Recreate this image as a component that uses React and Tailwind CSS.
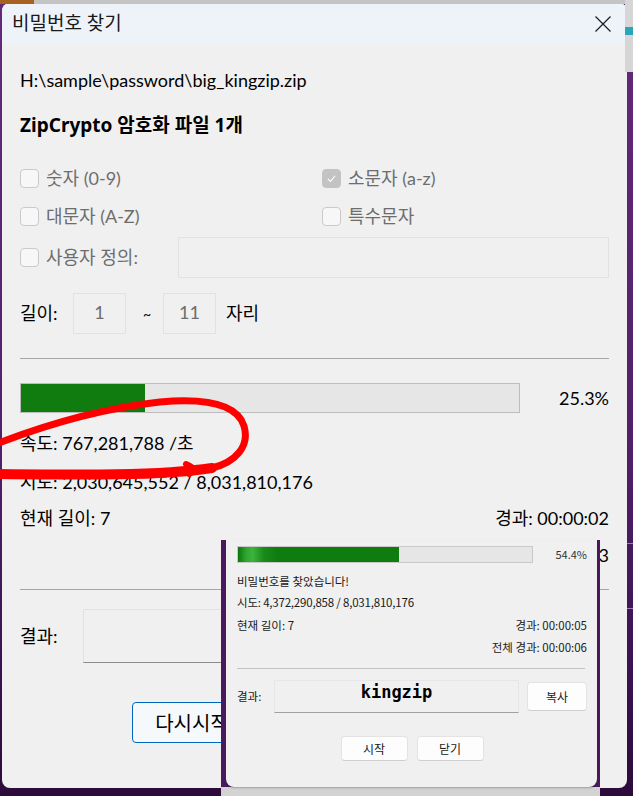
import React from 'react';

const sans = "font-['Lato','Noto_Sans_CJK_KR',sans-serif]";

function CheckBox({ checked, label }) {
  return (
    <div className="flex h-[24px] items-center">
      <span
        className={`flex h-[19px] w-[19px] items-center justify-center rounded-[4px] border ${
          checked ? 'border-[#c3c3c3] bg-[#c3c3c3]' : 'border-[#cacaca] bg-[#f7f7f7]'
        }`}
      >
        {checked && (
          <svg width="11" height="11" viewBox="0 0 12 12" fill="none">
            <path d="M2 6.5 L4.8 9.2 L10 3" stroke="#ffffff" strokeWidth="1.2" />
          </svg>
        )}
      </span>
      <span className="ml-[7px] text-[#6d6d6d]">{label}</span>
    </div>
  );
}

function MiniButton({ children, className = '' }) {
  return (
    <div
      className={`flex items-center justify-center rounded-[4px] border border-[#e3e3e3] border-b-[#cfcfcf] bg-[#fdfdfd] text-[12px] text-[#1a1a1a] ${className}`}
    >
      {children}
    </div>
  );
}

// Found-password window pasted on top of the main dialog
function FoundPanel() {
  return (
    <div className="absolute left-[221px] top-[540px] flex h-[256px] w-[379px] flex-col bg-[#d3d3d3]">
      <div className="flex h-[247px] bg-[#4a1a5e]">
        <div className="w-[5px]" />
        <div className="flex w-[371px] flex-col rounded-b-[8px] bg-[#f0f0f0] pl-[11px] pr-[10px] font-['Noto_Sans_CJK_KR',sans-serif] text-[11.5px] text-[#1a1a1a] shadow-[0_1px_2px_rgba(0,0,0,0.25)]">
          <div className="mt-[6px] flex h-[17px] items-center justify-between">
            <div className="h-[17px] w-[296px] border border-[#c9c9c9] bg-[#e6e6e6]">
              <div className="h-full w-[161px] bg-[linear-gradient(90deg,#0b760b_0%,#2fa52f_5%,#3cb33c_9%,#1a8a1a_16%,#0f7c0f_24%,#107c10_100%)]" />
            </div>
            <span className="text-[11px] text-[#333]">54.4%</span>
          </div>
          <div className="mt-[10px] flex h-[18px] items-center">비밀번호를 찾았습니다!</div>
          <div className="mt-[3px] flex h-[18px] items-center tracking-[-0.2px]">시도: 4,372,290,858 / 8,031,810,176</div>
          <div className="mt-[5px] flex h-[18px] items-center justify-between">
            <span>현재 길이: 7</span>
            <span>경과: 00:00:05</span>
          </div>
          <div className="mt-[4px] flex h-[18px] items-center justify-end">전체 경과: 00:00:06</div>
          <div className="mr-[2px] mt-[11px] h-px bg-[#c2c2c2]" />
          <div className="mt-[11px] flex h-[33px] items-center">
            <span className="w-[37px]">결과:</span>
            <div className="flex h-[33px] w-[245px] justify-center border border-[#e6e6e6] border-b-[#a0a0a0] bg-[#f0f0f0] font-['DejaVu_Sans_Mono',monospace] text-[17px] font-bold leading-[22px] text-black">
              kingzip
            </div>
            <MiniButton className="ml-[8px] h-[29px] w-[60px]">복사</MiniButton>
          </div>
          <div className="mt-[23px] flex justify-center gap-[9px]">
            <MiniButton className="h-[25px] w-[67px]">시작</MiniButton>
            <MiniButton className="h-[25px] w-[67px]">닫기</MiniButton>
          </div>
        </div>
        <div className="w-[3px]" />
      </div>
    </div>
  );
}

// Red marker loop drawn around the speed line
function MarkerLoop() {
  return (
    <svg className="pointer-events-none absolute left-0 top-0 blur-[0.6px]" width="633" height="796" viewBox="0 0 633 796" fill="none">
      <path
        d="M -4 444 C 40 427, 95 409, 160 402 C 205 398, 237 404, 244 426 C 250 446, 236 462, 212 468"
        stroke="#ff0000"
        strokeWidth="7"
        strokeLinecap="round"
      />
      <path
        d="M 212 468 C 160 476, 80 475, -4 474"
        stroke="#ff0000"
        strokeWidth="10"
        strokeLinecap="round"
      />
      <path d="M 186 464 C 193 467, 197 470, 189 474" stroke="#ff0000" strokeWidth="6" strokeLinecap="round" />
    </svg>
  );
}

export default function App() {
  return (
    <div className={`relative h-[796px] w-[633px] overflow-hidden bg-[linear-gradient(180deg,#642a7a_0%,#52206a_55%,#3a1250_85%,#2c0b3b_100%)] ${sans}`}>
      {/* desktop fragments around the window */}
      <div className="absolute left-0 right-0 top-0 h-[4px] bg-[#c4c4c4]" />
      <div className="absolute left-0 top-0 h-[4px] w-[34px] bg-[#a8621f]" />
      <div className="absolute right-0 top-0 h-[72px] w-[8px] bg-[#d6d6d6]" />
      <div className="absolute right-0 top-[27px] h-[8px] w-[8px] bg-[#2aa6b6]" />
      <div className="absolute right-0 top-[543px] h-px w-[6px] bg-[#9b7fb0]" />
      <div className="absolute right-0 top-[608px] h-px w-[6px] bg-[#9b7fb0]" />

      <div className="pl-[2px] pt-[3px]">
        <div className="flex h-[785px] w-[625px] flex-col overflow-hidden rounded-[8px] bg-[#f0f0f0] text-[18px] text-black">
          {/* title bar */}
          <div className="flex h-[41px] items-center justify-between bg-[#eef3f9] pl-[10px] pr-[16px]">
            <span className="text-[19px] text-[#1a1a1a]">비밀번호 찾기</span>
            <svg width="16" height="16" viewBox="0 0 16 16" fill="none">
              <path d="M0.5 0.5 L15.5 15.5 M15.5 0.5 L0.5 15.5" stroke="#1a1a1a" strokeWidth="1.2" />
            </svg>
          </div>

          <div className="flex flex-col px-[18px]">
            <div className="mt-[24px] flex h-[24px] items-center">H:\sample\password\big_kingzip.zip</div>
            <div className="mt-[21px] flex h-[24px] items-center font-['Noto_Sans','Noto_Sans_CJK_KR',sans-serif] text-[19px] font-bold">
              ZipCrypto 암호화 파일 1개
            </div>

            <div className="mt-[29px] grid grid-cols-[302px_1fr]">
              <CheckBox label="숫자 (0-9)" />
              <CheckBox checked label="소문자 (a-z)" />
            </div>
            <div className="mt-[14px] grid grid-cols-[302px_1fr]">
              <CheckBox label="대문자 (A-Z)" />
              <CheckBox label="특수문자" />
            </div>
            <div className="mt-[9px] flex h-[41px] items-center justify-between">
              <CheckBox label="사용자 정의:" />
              <div className="h-[41px] w-[431px] border border-[#e2e2e2] bg-[#f0f0f0]" />
            </div>

            <div className="mt-[15px] flex h-[41px] items-center">
              <span className="w-[53px]">길이:</span>
              <div className="flex h-[41px] w-[53px] justify-center border border-[#e2e2e2] pt-[5px] text-[#6d6d6d]">1</div>
              <span className="w-[37px] pl-[17px] text-[14px]">~</span>
              <div className="flex h-[41px] w-[53px] justify-center border border-[#e2e2e2] pt-[5px] text-[#6d6d6d]">11</div>
              <span className="ml-[10px]">자리</span>
            </div>

            <div className="mt-[24px] h-px bg-[#a6a6a6]" />

            <div className="mt-[24px] flex h-[30px] items-center justify-between">
              <div className="h-[30px] w-[500px] border border-[#bcbcbc] bg-[#e6e6e6]">
                <div className="h-full w-[124px] bg-[#107c10]" />
              </div>
              <span>25.3%</span>
            </div>

            <div className="mt-[18px] flex h-[24px] items-center">속도: 767,281,788 /초</div>
            <div className="mt-[15px] flex h-[24px] items-center">시도: 2,030,645,552 / 8,031,810,176</div>
            <div className="mt-[12px] flex h-[24px] items-center justify-between">
              <span>현재 길이: 7</span>
              <span>경과: 00:00:02</span>
            </div>
            <div className="mt-[13px] flex h-[24px] items-center justify-end">전체 경과: 00:00:03</div>

            <div className="mt-[22px] h-px bg-[#a6a6a6]" />

            <div className="mt-[19px] flex h-[54px] items-center">
              <span className="w-[63px]">결과:</span>
              <div className="h-[54px] w-[400px] border border-[#e2e2e2] border-b-[#8c8c8c] bg-[#f0f0f0]" />
            </div>

            <div className="mt-[39px] flex pl-[112px]">
              <div className="flex h-[41px] w-[120px] items-center justify-center rounded-[4px] border border-[#0067c0] bg-[#f6f9fc] text-[20px]">
                다시시작
              </div>
            </div>
          </div>
        </div>
      </div>

      <MarkerLoop />
      <FoundPanel />
    </div>
  );
}
